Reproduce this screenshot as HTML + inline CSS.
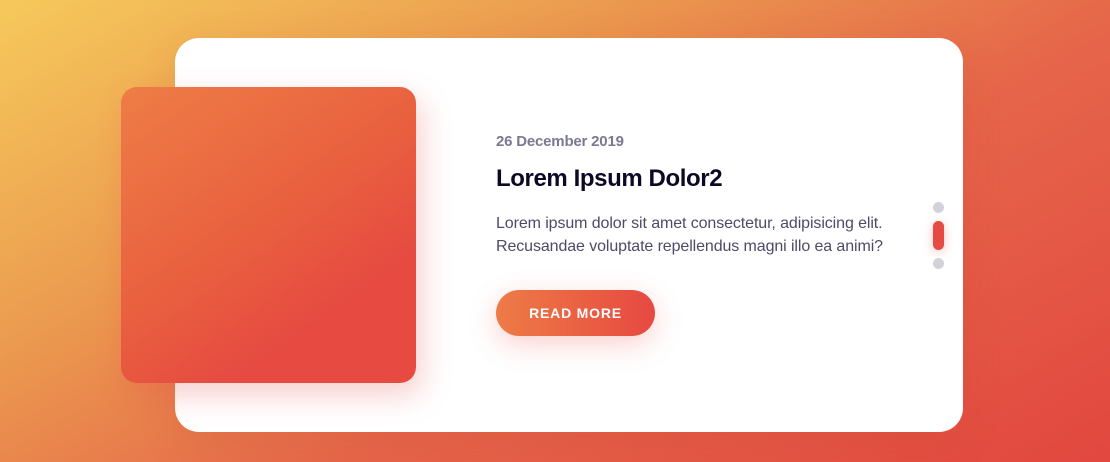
<!DOCTYPE html>
<html><head><style>
html,body{margin:0;padding:0}
body{width:1110px;height:462px;overflow:hidden;position:relative;font-family:"Liberation Sans",sans-serif;
background:linear-gradient(150deg,#f6c95b 0%,#eb9a4f 32%,#e6664a 60%,#e2473f 100%);}
.card{position:absolute;left:175px;top:38px;width:788px;height:394px;background:#fff;border-radius:24px;box-shadow:0 10px 40px rgba(180,60,40,.15)}
.img{position:absolute;left:121px;top:87px;width:295px;height:296px;border-radius:16px;
background:linear-gradient(145deg,#ee7d46 0%,#e9613f 45%,#e64a41 75%);box-shadow:6px 12px 30px rgba(230,80,80,.28)}
.date{position:absolute;left:496px;top:133px;font-size:15px;font-weight:bold;color:#7b7992;letter-spacing:-.2px}
.title{position:absolute;left:496px;top:165px;font-size:24px;font-weight:bold;color:#0d0925;letter-spacing:-.4px}
.txt{position:absolute;left:496px;top:212px;font-size:16px;line-height:23px;color:#4e4a67;letter-spacing:-.1px;white-space:nowrap}
.btn{position:absolute;left:496px;top:290px;width:159px;height:46px;border-radius:23px;
background:linear-gradient(90deg,#ee7b46,#e64941);color:#fff;font-size:14px;font-weight:bold;text-align:center;line-height:46px;letter-spacing:.8px;box-shadow:0 8px 28px rgba(240,100,90,.3)}
.dot{position:absolute;left:933px;width:11px;height:11px;border-radius:50%;background:#d2d2d8}
.pill{position:absolute;left:933px;top:221px;width:11px;height:29px;border-radius:6px;background:#e54b42;box-shadow:0 2px 10px rgba(230,80,70,.35)}
</style></head><body>
<div class="card"></div>
<div class="img"></div>
<div class="date">26 December 2019</div>
<div class="title">Lorem Ipsum Dolor2</div>
<div class="txt">Lorem ipsum dolor sit amet consectetur, adipisicing elit.<br>Recusandae voluptate repellendus magni illo ea animi?</div>
<div class="btn">READ MORE</div>
<div class="dot" style="top:202px"></div>
<div class="pill"></div>
<div class="dot" style="top:258px"></div>
</body></html>
